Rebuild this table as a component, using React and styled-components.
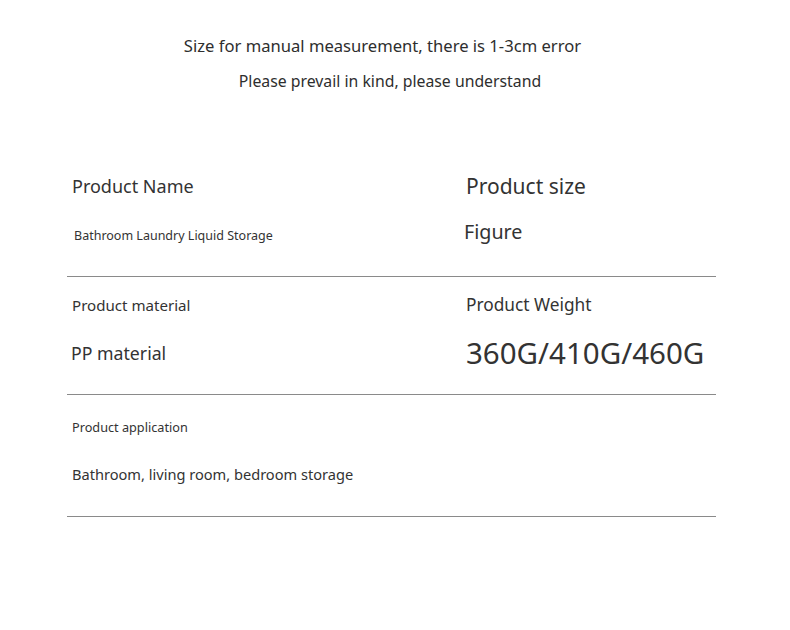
import React from 'react';
import styled, { createGlobalStyle } from 'styled-components';

const GlobalStyle = createGlobalStyle`
  html, body {
    margin: 0;
    padding: 0;
    background: #ffffff;
  }
  body {
    font-family: "Noto Sans", "Open Sans", sans-serif;
    color: #333333;
  }
`;

const Page = styled.div`
  width: 790px;
  height: 630px;
  background: #ffffff;
  overflow: hidden;
`;

const Notice = styled.div`
  display: flex;
  flex-direction: column;
  align-items: center;
  padding-top: 34px;
  gap: 11px;
`;

const NoticeLine = styled.div`
  font-size: ${(p) => p.size}px;
  line-height: 24px;
  color: #2e2e2e;
  margin-left: ${(p) => p.shift || 0}px;
`;

const Table = styled.div`
  margin: 81px 0 0 67px;
  width: 649px;
`;

const Row = styled.div`
  display: grid;
  grid-template-columns: 399px 1fr;
  height: ${(p) => p.height}px;
  border-bottom: 1px solid #8a8a8a;
  box-sizing: border-box;
  padding-top: ${(p) => p.top}px;
`;

const Cell = styled.div`
  display: flex;
  flex-direction: column;
  padding-left: ${(p) => p.indent ?? 5}px;
`;

const Label = styled.div`
  font-size: ${(p) => p.size}px;
  line-height: 24px;
  color: #333333;
  white-space: nowrap;
`;

const Value = styled.div`
  font-size: ${(p) => p.size}px;
  line-height: ${(p) => p.lh || 24}px;
  color: #333333;
  white-space: nowrap;
  margin-top: ${(p) => p.gap}px;
  margin-left: ${(p) => p.shift || 0}px;
`;

export default function App() {
  return (
    <Page>
      <GlobalStyle />
      <Notice>
        <NoticeLine size={16.6} shift={-25}>Size for manual measurement, there is 1-3cm error</NoticeLine>
        <NoticeLine size={15.8} shift={-10}>Please prevail in kind, please understand</NoticeLine>
      </Notice>
      <Table>
        <Row height={103} top={0}>
          <Cell>
            <Label size={18}>Product Name</Label>
            <Value size={12.5} gap={26} shift={2}>Bathroom Laundry Liquid Storage</Value>
          </Cell>
          <Cell indent={0}>
            <Label size={21}>Product size</Label>
            <Value size={19.7} gap={22} shift={-2}>Figure</Value>
          </Cell>
        </Row>
        <Row height={118} top={16}>
          <Cell>
            <Label size={15.1}>Product material</Label>
            <Value size={17.7} gap={24} shift={-1}>PP material</Value>
          </Cell>
          <Cell indent={0}>
            <Label size={17.3}>Product Weight</Label>
            <Value size={29.5} lh={36} gap={18}>360G/410G/460G</Value>
          </Cell>
        </Row>
        <Row height={122} top={20}>
          <Cell>
            <Label size={12.7}>Product application</Label>
            <Value size={14.6} gap={23}>Bathroom, living room, bedroom storage</Value>
          </Cell>
        </Row>
      </Table>
    </Page>
  );
}
